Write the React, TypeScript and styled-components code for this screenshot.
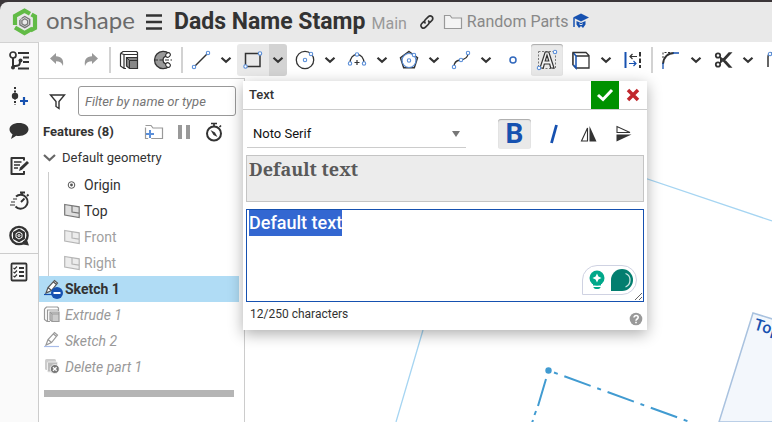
import React, { useEffect, useRef } from "react";
import styled, { createGlobalStyle, css } from "styled-components";

const ink = "#333333";
const blue = "#1651b0";
const sky = "#5b8fd9";

const GlobalStyle = createGlobalStyle`
  *, *::before, *::after { box-sizing: border-box; }
  body {
    margin: 0;
    background: #fff;
    color: ${ink};
    font: 14px/20px Roboto, "Liberation Sans", sans-serif;
  }
  button { padding: 0; border: 0; background: none; color: inherit; font: inherit; cursor: pointer; }
  svg { display: block; flex: none; }
`;

const Page = styled.div`
  display: flex;
  flex-direction: column;
  min-height: 100vh;
  background: #3b3639;
  overflow: hidden;
`;

const Header = styled.header`
  display: flex;
  align-items: center;
  height: 40px;
  margin-top: 2px;
  padding-left: 12px;
  background: #e9e9e9;
  border-top-left-radius: 8px;
  white-space: nowrap;
`;

const Brand = styled.a`
  display: flex;
  align-items: center;
  gap: 8px;
  width: 134px;
  color: #6b6b6b;
  font: 400 24px/32px Lato, sans-serif;
  text-decoration: none;
  span { padding-bottom: 4px; }
`;

const Title = styled.h1`
  margin: 0 6px 0 12px;
  font-size: 23px;
  line-height: 32px;
  font-weight: 700;
`;

const Branch = styled.span`
  margin: 4px 12px 0 0;
  font-size: 16px;
  color: #999;
`;

const FolderLink = styled.a`
  display: flex;
  align-items: center;
  gap: 4px;
  margin: 0 4px 0 8px;
  color: #888;
  font-size: 16px;
  text-decoration: none;
`;

const Body = styled.div`
  display: flex;
  flex: 1;
  background: #fff;
`;

const Rail = styled.nav`
  display: flex;
  flex-direction: column;
  width: 39px;
  flex: none;
  background: #fafafa;
  border-top: 1px solid #d2d2d2;
  border-right: 1px solid #ccc;
`;

const RailButton = styled.button<{ $divided?: boolean }>`
  display: grid;
  place-items: center;
  height: 35px;
  ${(p) => p.$divided && css`border-top: 1px solid #ccc; height: 36px;`}
`;

const Main = styled.main`
  display: flex;
  flex-direction: column;
  flex: 1;
  min-width: 0;
`;

const Toolbar = styled.div`
  display: flex;
  align-items: center;
  gap: 2px;
  height: 36px;
  padding-left: 2px;
  overflow: hidden;
`;

const Separator = styled.span`
  flex: none;
  width: 2px;
  height: 26px;
  background: #d2d2d2;
`;

const Split = styled.div`
  display: flex;
  flex: none;
`;

const Tool = styled.button<{ $state?: "open" | "pressed" }>`
  display: grid;
  place-items: center;
  flex: none;
  width: 32px;
  height: 32px;
  border-radius: 3px;
  ${(p) => p.$state === "open" && css`background: #e9e9e9; border-radius: 3px 0 0 3px;`}
  ${(p) => p.$state === "pressed" && css`background: #e9e9e9; box-shadow: inset 0 1px 1px #aaa;`}
`;

const MoreButton = styled.button<{ $open?: boolean }>`
  display: grid;
  place-items: center;
  width: 18px;
  height: 32px;
  border-radius: 0 3px 3px 0;
  background: ${(p) => (p.$open ? "#d3d3d3" : "transparent")};
`;

const Workspace = styled.div`
  position: relative;
  display: flex;
  flex: 1;
`;

const FeaturePanel = styled.aside`
  width: 206px;
  flex: none;
  border-top: 1px solid #ccc;
  border-right: 1px solid #ccc;
`;

const FilterRow = styled.div`
  display: flex;
  align-items: center;
  gap: 12px;
  padding: 7px 8px 4px 10px;
`;

const FilterInput = styled.input`
  flex: 1;
  min-width: 0;
  height: 30px;
  padding: 0 6px;
  border: 1px solid #999;
  border-radius: 3px;
  background: #fff;
  font: italic 13px/20px Roboto, sans-serif;
  &::placeholder { color: #757575; opacity: 1; }
`;

const PanelHeading = styled.div`
  display: flex;
  align-items: center;
  height: 24px;
  padding: 0 20px 0 4px;
  h2 { flex: 1; margin: 0; font-size: 13px; line-height: 20px; font-weight: 700; white-space: nowrap; }
`;

const HeadingActions = styled.div`
  display: flex;
  align-items: center;
  gap: 12px;
`;

const Group = styled.button`
  display: flex;
  align-items: center;
  gap: 6px;
  width: 100%;
  height: 28px;
  padding: 0 4px;
  font-size: 13px;
`;

const List = styled.ul<{ $nested?: boolean }>`
  margin: 0;
  padding: 0;
  list-style: none;
  ${(p) => p.$nested && css`
    margin-left: 9px;
    border-left: 1px solid #ccc;
  `}
`;

const Feature = styled.li<{ $tone?: "dim" | "rolled" | "selected"; $nested?: boolean }>`
  display: flex;
  align-items: center;
  gap: ${(p) => (p.$nested ? "4px" : "2px")};
  height: 26px;
  margin-right: 5px;
  padding-left: ${(p) => (p.$nested ? "15px" : "4px")};
  white-space: nowrap;
  ${(p) => p.$tone === "dim" && css`color: #a0a0a0;`}
  ${(p) => p.$tone === "rolled" && css`color: #999; font-style: italic;`}
  ${(p) => p.$tone === "selected" && css`background: #b0dcf5; font-weight: 700;`}
`;

const RollbackBar = styled.div`
  height: 7px;
  margin: 10px 10px 0 5px;
  background: #b5b5b5;
`;

const Canvas = styled.div`
  flex: 1;
  min-width: 0;
  overflow: hidden;
`;

const Dialog = styled.section`
  position: absolute;
  top: 3px;
  left: 204px;
  width: 404px;
  background: #fff;
  box-shadow: 0 4px 14px rgba(0, 0, 0, 0.32);
`;

const DialogHeader = styled.div`
  display: flex;
  align-items: center;
  height: 29px;
  padding-left: 6px;
  border-bottom: 1px solid #ccc;
  h2 { flex: 1; margin: 0; font-size: 13px; line-height: 20px; font-weight: 500; }
`;

const DialogAction = styled.button<{ $accept?: boolean }>`
  display: grid;
  place-items: center;
  width: 28px;
  height: 28px;
  background: ${(p) => (p.$accept ? "#009100" : "transparent")};
`;

const FormatRow = styled.div`
  display: flex;
  align-items: center;
  height: 45px;
  padding: 3px 6px 0 4px;
`;

const FontField = styled.div`
  display: grid;
  align-items: center;
  flex: 1;
  margin-right: 32px;
  border-bottom: 1px solid #ccc;
  > * { grid-area: 1 / 1; }
  svg { justify-self: end; margin-right: 4px; pointer-events: none; }
`;

const FontSelect = styled.select`
  appearance: none;
  height: 26px;
  padding: 0 24px 0 6px;
  border: 0;
  background: transparent;
  color: #111;
  font: 13px/20px Roboto, sans-serif;
`;

const FormatButton = styled.button<{ $on?: boolean }>`
  display: grid;
  place-items: center;
  width: ${(p) => (p.$on ? "33px" : "35px")};
  height: 30px;
  margin-right: ${(p) => (p.$on ? "5px" : "0")};
  border-radius: 3px;
  color: ${blue};
  font-size: 28px;
  font-weight: 700;
  line-height: 30px;
  ${(p) => p.$on && css`background: #e9e9e9; box-shadow: inset 0 1px 1px #aaa;`}
`;

const Fields = styled.div`
  display: flex;
  flex-direction: column;
  gap: 7px;
  padding: 0 3px;
`;

const Preview = styled.output`
  height: 47px;
  padding: 0 2px;
  border: 1px solid #c4c4c4;
  background: #ececec;
  color: #595959;
  font: 700 18px/26px "Noto Serif", "DejaVu Serif Condensed", "DejaVu Serif", serif;
`;

const EditorBox = styled.div`
  position: relative;
  display: grid;
`;

const Editor = styled.textarea`
  width: 100%;
  height: 93px;
  padding: 0 2px;
  border: 1px solid ${blue};
  border-radius: 0;
  outline: none;
  resize: vertical;
  background: #fff;
  color: ${ink};
  font: 500 18px/26px Roboto, sans-serif;
  &::selection { background: #3367d1; color: #fff; }
`;

const Assistant = styled.button`
  position: absolute;
  right: 7px;
  bottom: 7px;
  display: flex;
  align-items: center;
  gap: 6px;
  width: 55px;
  height: 30px;
  padding-left: 6px;
  border: 1px solid #cfd2e2;
  border-radius: 15px 15px 15px 0;
  background: #fff;
`;

const DialogFooter = styled.div`
  display: flex;
  justify-content: space-between;
  align-items: flex-start;
  height: 28px;
  padding: 2px 4px 0 7px;
  font-size: 12px;
  button { padding-top: 8px; }
`;

type IconProps = { w?: number; h?: number; children: React.ReactNode };
const Icon = ({ w = 24, h = 24, children }: IconProps) => (
  <svg width={w} height={h} viewBox={`0 0 ${w} ${h}`} fill="none" stroke={ink} strokeWidth="1.5" aria-hidden="true">
    {children}
  </svg>
);

const Handle = ({ x, y, r = 1.7 }: { x: number; y: number; r?: number }) => (
  <circle cx={x} cy={y} r={r} stroke={sky} strokeWidth="1.1" fill="#fff" />
);

const Chevron = () => (
  <Icon w={12} h={8}><path d="M1.500 1.700 6 5.700l4.500-4" strokeWidth="2.200" /></Icon>
);

const More = ({ label, open }: { label: string; open?: boolean }) => (
  <MoreButton $open={open} aria-label={`More ${label} tools`}><Chevron /></MoreButton>
);

const LogoMark = () => (
  <Icon w={26} h={28}>
    <g stroke="#62bb46" strokeWidth="4.200">
      <path d="M3 17V8l9.500-5.400 5.500 3.200" />
      <path d="m19.500 6.500 3.500 2V20l-4.500 2.500" />
      <path d="M3 19.500 12.500 25l8-4.500" />
    </g>
    <path d="m12.800 8.500 4.900 2.800v5.600l-4.900 2.800-4.900-2.800v-5.600z" stroke="#777" strokeWidth="1.400" />
    <path d="m12.800 10.800 2.900 1.700v3.300l-2.900 1.700-2.900-1.700v-3.300z" stroke="#777" strokeWidth="1.300" />
    <path d="m6 12.500 4-3M16 19.500l3-3" stroke="#e9e9e9" strokeWidth="1" />
  </Icon>
);

const CubeIcon = () => (
  <Icon>
    <path d="M3.500 5.500 6 3.500h13.500l1 1V9M3.500 5.500V18l3.500 2.500h2M7 20V6.500h13M7 6.500l-3-1" strokeWidth="1.200" />
    <path d="M9.500 9.500h11v11h-8l-3-2.500z" fill="#888" strokeWidth="1.200" />
    <path d="m9.500 9.500 3 3h8m-8 0v8" strokeWidth="1" />
  </Icon>
);

const FolderShape = ({ add }: { add?: boolean }) => (
  <Icon w={20} h={18}>
    <path
      d="M1.500 15.500v-13H7l2 2.500h9.500v10.500z"
      stroke="#999" strokeWidth="1.200" fill={add ? "none" : "#f4f4f4"}
      strokeDasharray={add ? "11 2 40 3" : undefined}
    />
    {add && <path d="M6 7v8M2 11h8" stroke={sky} strokeWidth="2" />}
  </Icon>
);

const StopwatchIcon = () => (
  <Icon w={20} h={20}>
    <circle cx="10" cy="11.500" r="7" strokeWidth="2" />
    <path d="M10 4V1.500M7 1.500h6M15.500 5 17 3.500" strokeWidth="1.700" />
    <path d="m6.500 8 4.500 2.500 2.500 4.500-4-2z" fill={ink} stroke="none" />
  </Icon>
);

const PlaneIcon = ({ dim }: { dim?: boolean }) => (
  <Icon w={16} h={16}>
    <path d="m.7 1.500 14.500 2.300v10.700L.7 12z" stroke={dim ? "#b5b5b5" : "#777"} strokeWidth="1.200" fill={dim ? "#ececec" : "#dedede"} />
    <path d="M8 3v6l7 1.200" stroke={dim ? "#b5b5b5" : "#777"} strokeWidth="1.200" />
  </Icon>
);

const PencilIcon = ({ busy }: { busy?: boolean }) => (
  <Icon w={20} h={20}>
    <path d="M3 14 5 8.500 11.500 1.500 14.500 4 8.500 11.500zM5 8.500l3.500 3M10.500 3l3 2.500" strokeWidth="1.200" stroke={busy ? "#555" : "#999"} fill={busy ? "#fff" : "none"} />
    <path d="M1 15.500h15" stroke={busy ? blue : "#a8bce8"} strokeWidth="1.200" />
    {busy && (
      <>
        <circle cx="14" cy="14" r="6" fill={blue} stroke="none" />
        <path d="M10.500 14h7" stroke="#fff" strokeWidth="2" />
      </>
    )}
  </Icon>
);

const MutedExtrudeIcon = () => (
  <Icon w={20} h={20}>
    <g stroke="#999" strokeWidth="1.200">
      <path d="M1.500 4 3.500 2h11l1 1v3M1.500 4v10.500L4 16.500h3M4.500 16V5h10.500" />
      <path d="M7 7h9v9.500H9L7 15z" fill="#ccc" />
      <path d="m7 7 2 2h7M9 9v7" strokeWidth="1" />
    </g>
  </Icon>
);

const DeleteIcon = () => (
  <Icon w={20} h={20}>
    <rect x="2" y="2" width="11" height="11" rx="1.500" fill="#ccc" stroke="none" />
    <rect x="4.500" y="5" width="10" height="10" rx="1" fill="#bbb" stroke="#eee" strokeWidth="1" />
    <circle cx="11.800" cy="12" r="4.500" fill="#777" stroke="#fff" strokeWidth=".8" />
    <path d="m10 10.200 3.600 3.600m0-3.600L10 13.800" stroke="#fff" strokeWidth="1.300" />
  </Icon>
);

const Drawing = () => (
  <svg width="527" height="344" viewBox="245 78 527 344" fill="none" aria-label="Sketch canvas">
    <path d="M600 163 772 221M423 330 396 422" stroke="#a6d5f2" strokeWidth="1.300" />
    <path d="M792 325 753 313 719 422H792z" fill="#f3f7fc" stroke="#a9c2df" strokeWidth="1.500" />
    <text x="753" y="329" transform="rotate(17 753 329)" fill={blue} fontSize="16" fontWeight="500" fontFamily="Roboto, sans-serif">Top</text>
    <g stroke="#419bd1" strokeWidth="2">
      <path d="m554 372.500 136 49.500" strokeDasharray="4 7 28 7" />
      <path d="m546 379-8 27M536 411l-1.500 4M533 420l-1 3" />
    </g>
    <circle cx="548.500" cy="370.500" r="3.200" fill="#419bd1" />
  </svg>
);

export default function App() {
  const editor = useRef<HTMLTextAreaElement>(null);
  useEffect(() => {
    editor.current?.focus();
    editor.current?.select();
  }, []);

  return (
    <>
      <GlobalStyle />
      <Page>
        <Header>
          <Brand href="#"><LogoMark /><span>onshape</span></Brand>
          <button aria-label="Main menu">
            <Icon w={16} h={16}><path d="M0 1.500h16M0 8h16M0 14.500h16" strokeWidth="2.600" /></Icon>
          </button>
          <Title>Dads Name Stamp</Title>
          <Branch>Main</Branch>
          <button aria-label="Copy link">
            <Icon w={16} h={16}>
              <path d="M6.500 9.500c-1.800-1.800-.8-3.200 0-4l2.700-2.700c1.100-1.100 2.700-1.200 3.800-.1s1 2.700-.1 3.800l-2.200 2.200M9.200 6.500c1.800 1.800.8 3.200 0 4l-2.700 2.700c-1.100 1.100-2.700 1.200-3.800.1s-1-2.700.1-3.800L5 7.300" strokeWidth="1.700" />
            </Icon>
          </button>
          <FolderLink href="#"><FolderShape />Random Parts</FolderLink>
          <button aria-label="Learning center">
            <Icon w={18} h={18}>
              <path d="m1 4.500 8-4 8 4-8 4z" fill={blue} stroke="none" />
              <path d="M4.500 8 9 10l4.500-2v3.500L11 15l-2-2-2 2-2.500-3.500z" fill={blue} stroke="none" />
              <path d="M2 5v9" stroke={blue} />
              <path d="m7.200 10.800 1.800 1 1.800-1" stroke="#e9e9e9" strokeWidth="1" />
            </Icon>
          </button>
        </Header>

        <Body>
          <Rail aria-label="Document panels">
            <RailButton aria-label="Feature list">
              <Icon>
                <circle cx="6" cy="6" r="3" strokeWidth="1.700" />
                <path d="M6 9v11M6 17c7 0 7-1 7-5" strokeWidth="2" />
                <circle cx="13.500" cy="11.500" r="2" fill={ink} stroke="none" /><circle cx="6" cy="18.500" r="2" fill={ink} stroke="none" />
                <path d="M11 4h11M16 8.500h6M16 13h6M11 19.500h11" strokeWidth="1.800" />
              </Icon>
            </RailButton>
            <RailButton aria-label="Insert">
              <Icon>
                <path d="M8 3v18" strokeWidth="2" strokeDasharray="2 1.500" />
                <circle cx="8" cy="12" r="3.200" fill={ink} stroke="none" />
                <path d="M13 17h8M17 13v8" stroke={blue} strokeWidth="2.200" />
              </Icon>
            </RailButton>
            <RailButton aria-label="Comments">
              <Icon><path d="M12 4c5.500 0 9.500 2.700 9.500 6.300S17.500 17 12 17c-1 0-2-.1-2.800-.3L4 20l1.500-4.700C3.500 14 2.500 12.300 2.500 10.300 2.500 6.700 6.500 4 12 4z" fill={ink} stroke="none" /></Icon>
            </RailButton>
            <RailButton aria-label="Notes">
              <Icon>
                <path d="M17 6.500V4H4.500v16H17v-3" strokeWidth="2" strokeLinejoin="round" />
                <path d="M7 8h7.500M7 11h6M7 14h4" strokeWidth="1.500" />
                <path d="m12 17 1-3.500L20 7l2 2-7 6.800z" fill={ink} stroke="none" />
              </Icon>
            </RailButton>
            <RailButton aria-label="Performance">
              <Icon>
                <path d="M9 7.500a7 7 0 1 1-.5 10M13 3.500h5M15 4v2M20 7l1.500-1.500M14 13l3.500-3.500" strokeWidth="1.900" />
                <path d="M6 10h4M4 13h4M3 16h5" strokeWidth="1.200" />
              </Icon>
            </RailButton>
            <RailButton aria-label="Help">
              <Icon>
                <circle cx="12" cy="11.500" r="8.600" strokeWidth="2.400" /><path d="m16 17 4-1 2 5.500-6-1z" fill={ink} stroke="none" />
                <path d="m12 5.500 5.200 3v6l-5.200 3-5.200-3v-6z" fill={ink} />
                <path d="m12 8 3 1.700v3.600L12 15l-3-1.700V9.700z" stroke="#fafafa" strokeWidth="1" />
                <circle cx="12" cy="11.500" r="1" stroke="#fafafa" strokeWidth="1" />
              </Icon>
            </RailButton>
            <RailButton $divided aria-label="Checklist">
              <Icon>
                <rect x="4.500" y="3.500" width="15" height="17" rx="1" strokeWidth="1.800" />
                <path d="m6.500 8 1.200 1L10 6.500M6.500 12l1.200 1 2.300-2.500M6.500 16l1.200 1 2.300-2.500" strokeWidth="1.200" />
                <path d="M12 8h5M12 12h5M12 16h5" strokeWidth="2" />
              </Icon>
            </RailButton>
          </Rail>

          <Main>
            <Toolbar role="toolbar" aria-label="Sketch tools">
              <Tool aria-label="Undo"><Icon><path d="M5 10.500 11 5v3.300c5.500.2 8 3 7 9.700-1.200-3.500-3.500-4.700-7-4.700V16z" fill="#999" stroke="none" /></Icon></Tool>
              <Tool aria-label="Redo"><Icon><path d="M19 10.500 13 5v3.300c-5.500.2-8 3-7 9.700 1.200-3.500 3.500-4.700 7-4.700V16z" fill="#999" stroke="none" /></Icon></Tool>
              <Separator />
              <Tool aria-label="Extrude"><CubeIcon /></Tool>
              <Tool aria-label="Revolve">
                <Icon>
                  <path d="M18 5.500A8.700 8.700 0 1 0 18 18.500c1.500-1.300.5-3-1-3-1.500.5-5 .5-5-3.500s3.500-4 5-3.500c1.500 0 2.500-1.700 1-3z" fill="#999" strokeWidth="1.300" />
                  <path d="M3 12h18" strokeWidth="1.200" strokeDasharray="4 1.500" />
                  <ellipse cx="17" cy="7" rx="2" ry="2.500" transform="rotate(50 17 7)" fill="#fff" strokeWidth="1" />
                  <ellipse cx="17" cy="17" rx="2" ry="2.500" transform="rotate(-50 17 17)" fill="#fff" strokeWidth="1" />
                </Icon>
              </Tool>
              <Separator />
              <Split>
                <Tool aria-label="Line"><Icon><path d="M5 19 19 5" /><Handle x={5} y={19} /><Handle x={19} y={5} /></Icon></Tool>
                <More label="line" />
              </Split>
              <Split>
                <Tool $state="open" aria-label="Rectangle"><Icon><path d="M4.500 5.500h14.500v13H4.500z" /><Handle x={4.500} y={18.500} /><Handle x={19} y={5.500} /></Icon></Tool>
                <More label="rectangle" open />
              </Split>
              <Split>
                <Tool aria-label="Circle"><Icon><circle cx="12" cy="12" r="8.700" strokeWidth="1.300" /><Handle x={12} y={12} /><Handle x={18} y={6} /></Icon></Tool>
                <More label="circle" />
              </Split>
              <Split>
                <Tool aria-label="Arc"><Icon><path d="M5 15.500C5 10 8 6.500 12 6.500s7 3.500 7 9" strokeWidth="1.300" /><path d="M12 12v5M9.500 14.500h5" strokeWidth="1.200" /><Handle x={5} y={15.500} /><Handle x={12} y={6.500} /><Handle x={19} y={15.500} /></Icon></Tool>
                <More label="arc" />
              </Split>
              <Split>
                <Tool aria-label="Polygon"><Icon><path d="m12 3.500 8.500 6.200-3.200 10H6.700l-3.200-10z" /><circle cx="12" cy="12.500" r="7" stroke={sky} strokeWidth="1.200" /><Handle x={12} y={12.500} /><Handle x={17} y={7} /></Icon></Tool>
                <More label="polygon" />
              </Split>
              <Split>
                <Tool aria-label="Spline"><Icon><path d="M5 19c0-4 2-6.500 6-7 5-.5 8-2 8-7" strokeWidth="1.300" /><Handle x={5} y={19} /><Handle x={12} y={12} /><Handle x={19} y={5} /></Icon></Tool>
                <More label="spline" />
              </Split>
              <Tool aria-label="Point"><Icon><circle cx="12" cy="12" r="3" stroke="#3269bd" /></Icon></Tool>
              <Tool $state="pressed" aria-label="Text">
                <Icon>
                  <path d="M3.500 3.500h17v17h-17z" strokeWidth="1" strokeDasharray="2 1.500" stroke="#777" />
                  <path d="M5 20 10.200 4h3.600L19 20h-3.300l-1-4H9.300l-1 4zM10.200 13h3.600L12 7z" fill="#f5f5f5" strokeWidth="1.200" />
                  <Handle x={4} y={20} /><Handle x={20} y={4} />
                </Icon>
              </Tool>
              <Split>
                <Tool aria-label="Project"><Icon><path d="M4 4.500h13l3 3V20H7l-3-3zM7 8h13" strokeWidth="1.300" /><path d="m4.500 5 2.500 3v12l-2.500-3" stroke={blue} fill="#fff" /><path d="M4 4.500V17" strokeWidth="1.200" /></Icon></Tool>
                <More label="projection" />
              </Split>
              <Tool aria-label="Constrain">
                <Icon>
                  <path d="M4.500 4v16" stroke={blue} strokeWidth="2" /><path d="M19 4v16" strokeWidth="2" strokeDasharray="4.500 2" />
                  <path d="M16 8.500H9m2.500-2.500L9 8.500 11.500 11" strokeWidth="1.200" /><path d="M8 15.500h7M12.500 13l2.500 2.500-2.500 2.500" stroke={blue} strokeWidth="1.200" />
                </Icon>
              </Tool>
              <Separator />
              <Split>
                <Tool aria-label="Fillet"><Icon><path d="M4 10V4.500h8" strokeWidth="1" strokeDasharray="2 1.500" /><path d="M4 16C4.500 9 9 5 15 5" strokeWidth="2" /><path d="M4 15v6M14 5h6" stroke={blue} strokeWidth="1.300" /></Icon></Tool>
                <More label="fillet" />
              </Split>
              <Split>
                <Tool aria-label="Trim"><Icon><circle cx="7" cy="7.500" r="2.200" strokeWidth="1.800" /><circle cx="7" cy="16.500" r="2.200" strokeWidth="1.800" /><path d="m9 9 3 2.500 6-6.500h2l-6.500 7L20 19h-2l-6-6.500L9 15" fill={ink} strokeWidth="1.300" /></Icon></Tool>
                <More label="trim" />
              </Split>
              <Tool aria-label="Offset"><Icon><path d="M5 19V9c0-3 2-4 5-4h10" /><Handle x={7} y={6} /></Icon></Tool>
            </Toolbar>

            <Workspace>
              <FeaturePanel aria-label="Features">
                <FilterRow>
                  <Icon w={17} h={17}><path d="M1.500 2h14L10 8.500v7l-3-2v-5z" strokeWidth="1.400" /></Icon>
                  <FilterInput aria-label="Filter features" placeholder="Filter by name or type" />
                </FilterRow>
                <PanelHeading>
                  <h2>Features (8)</h2>
                  <HeadingActions>
                    <button aria-label="New folder"><FolderShape add /></button>
                    <button aria-label="Pause"><Icon w={16} h={16}><path d="M4 1v14M12 1v14" stroke="#999" strokeWidth="4" /></Icon></button>
                    <button aria-label="Rebuild times"><StopwatchIcon /></button>
                  </HeadingActions>
                </PanelHeading>
                <Group aria-expanded="true">
                  <Icon w={13} h={8}><path d="m1 1 5.500 5L12 1" stroke="#666" strokeWidth="2.200" /></Icon>
                  Default geometry
                </Group>
                <List $nested>
                  <Feature $nested>
                    <Icon w={16} h={16}><circle cx="7.500" cy="8" r="3.300" strokeWidth="1" stroke="#555" /><circle cx="7.500" cy="8" r="1.400" fill="#555" stroke="none" /></Icon>Origin
                  </Feature>
                  <Feature $nested><PlaneIcon />Top</Feature>
                  <Feature $nested $tone="dim"><PlaneIcon dim />Front</Feature>
                  <Feature $nested $tone="dim"><PlaneIcon dim />Right</Feature>
                </List>
                <List>
                  <Feature $tone="selected"><PencilIcon busy />Sketch 1</Feature>
                  <Feature $tone="rolled"><MutedExtrudeIcon />Extrude 1</Feature>
                  <Feature $tone="rolled"><PencilIcon />Sketch 2</Feature>
                  <Feature $tone="rolled"><DeleteIcon />Delete part 1</Feature>
                </List>
                <RollbackBar />
              </FeaturePanel>
              <Canvas><Drawing /></Canvas>

              <Dialog role="dialog" aria-label="Text">
                <DialogHeader>
                  <h2>Text</h2>
                  <DialogAction $accept aria-label="Accept"><Icon w={18} h={14}><path d="m2 7 5 4.500L16 2" stroke="#fff" strokeWidth="3" /></Icon></DialogAction>
                  <DialogAction aria-label="Cancel"><Icon w={14} h={14}><path d="m2 2 10 10M12 2 2 12" stroke="#c1272d" strokeWidth="3.500" /></Icon></DialogAction>
                </DialogHeader>
                <FormatRow>
                  <FontField>
                    <FontSelect aria-label="Font" defaultValue="Noto Serif"><option>Noto Serif</option></FontSelect>
                    <Icon w={12} h={8}><path d="M2 1h8L6 7z" fill="#777" stroke="none" /></Icon>
                  </FontField>
                  <FormatButton $on aria-pressed="true" aria-label="Bold">B</FormatButton>
                  <FormatButton aria-label="Italic"><Icon><path d="m9.500 21 5-18" stroke={blue} strokeWidth="2.800" /></Icon></FormatButton>
                  <FormatButton aria-label="Flip horizontal"><Icon><path d="M10.500 6v13h-6z" strokeWidth="1.100" /><path d="M12.500 4v15.500h7z" fill={ink} stroke="none" /></Icon></FormatButton>
                  <FormatButton aria-label="Flip vertical"><Icon><path d="M5 4.500v6h13z" strokeWidth="1.100" /><path d="M4.500 12.500h15l-15 7z" fill={ink} stroke="none" /></Icon></FormatButton>
                </FormatRow>
                <Fields>
                  <Preview>Default text</Preview>
                  <EditorBox>
                    <Editor ref={editor} aria-label="Text content" defaultValue="Default text" maxLength={250} spellCheck={false} />
                    <Assistant aria-label="Writing assistant">
                      <Icon w={16} h={20}>
                        <circle cx="8" cy="8" r="7.500" fill="#00a88a" stroke="none" />
                        <path d="M4 13h8v2.500H4zM4.500 17h7v.5c-1 2-6 2-7 0z" fill="#00a88a" stroke="none" />
                        <path d="m8 3.500 1.400 3.100L12.500 8 9.400 9.400 8 12.500 6.600 9.400 3.500 8l3.100-1.400z" fill="#fff" stroke="none" />
                      </Icon>
                      <Icon w={22} h={22}>
                        <path d="M0 22V11a11 11 0 1 1 11 11z" fill="#027e6f" stroke="none" />
                        <path d="M14.500 4.500c6 2 6 11 0 13.500" stroke="#c9e6e2" strokeWidth="1.300" />
                      </Icon>
                    </Assistant>
                  </EditorBox>
                </Fields>
                <DialogFooter>
                  <span>12/250 characters</span>
                  <button aria-label="Help with text">
                    <Icon w={14} h={14}>
                      <circle cx="7" cy="7" r="6.300" fill="#999" stroke="none" />
                      <path d="M5 5.500c0-2.700 4.200-2.500 4.200 0C9.200 7 7 7 7 8.700M7 9.800v1.500" stroke="#fff" strokeWidth="1.600" />
                    </Icon>
                  </button>
                </DialogFooter>
              </Dialog>
            </Workspace>
          </Main>
        </Body>
      </Page>
    </>
  );
}
